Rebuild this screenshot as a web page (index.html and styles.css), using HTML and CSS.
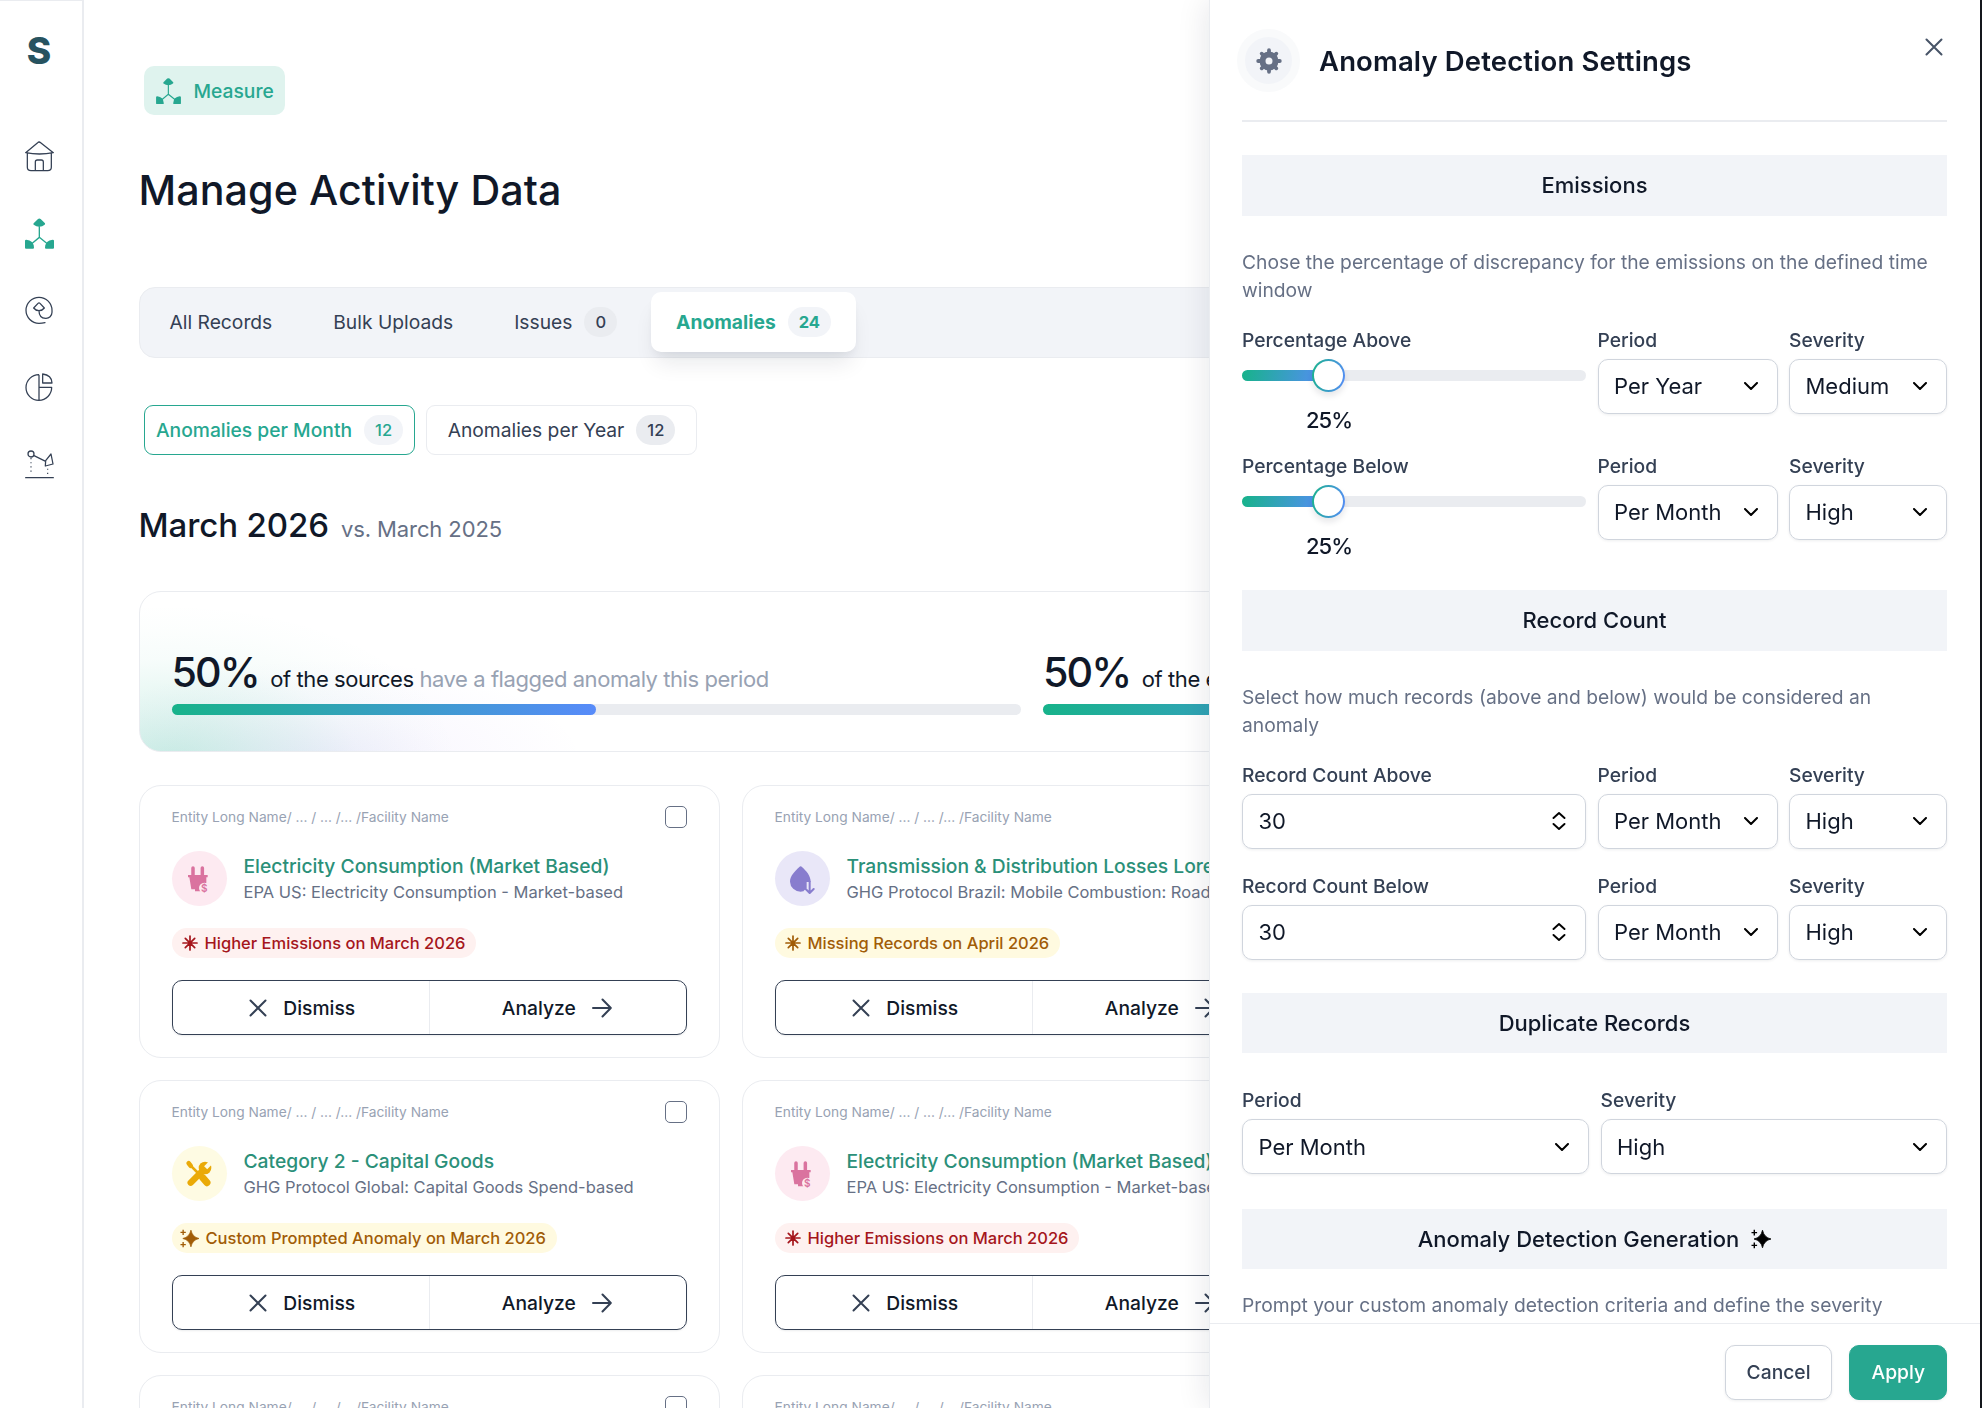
FILE: index.html
```html
<!DOCTYPE html>
<html lang="en">
<head>
  <meta charset="UTF-8" />
  <meta name="viewport" content="width=device-width, initial-scale=1.0"/>
  <title>Manage Activity Data</title>
  <link rel="stylesheet" href="styles.css">
</head>
<body>

  <!-- Icons -->
  <svg class="sprite">
    <symbol id="i-home" viewBox="0 0 87 91">
      <path d="M2 34 L38 4 Q42 0 47 4 L85 34 M2 34 Q43 42 85 34 M7 37 V78 Q7 88 18 88 H68 Q79 88 79 78 V37 M31 88 V62 Q31 56 37 56 H49 Q55 56 55 62 V88" fill="none" stroke="currentColor" stroke-width="3.8" stroke-linejoin="round" stroke-linecap="round"/>
    </symbol>
    <symbol id="i-measure" viewBox="0 0 87 91">
      <path d="M39 2 Q43 -1 47 2 L60 15 Q61 18 59 19 Q52 25 43 25 Q34 25 26 19 Q24 18 26 15 Z M0 67 Q0 64 4 64 Q26 66 27 88 Q27 91 24 91 H3 Q0 91 0 88 Z M87 67 Q87 64 83 64 Q61 66 60 88 Q60 91 63 91 H84 Q87 91 87 88 Z" fill="currentColor"/>
      <path d="M43 24 V57 L20 76 M43 57 L67 76" fill="none" stroke="currentColor" stroke-width="4"/>
    </symbol>
    <symbol id="i-target" viewBox="0 0 87 87">
      <path d="M60 80 Q51 82 42 82 A39 39 0 1 1 81 43 V49 A18 18 0 0 1 62 67 Q42 66 42 44 M39 22 Q42 19 45 22 L58 36 Q52 44 42 44 Q32 44 26 36 Z" fill="none" stroke="currentColor" stroke-width="3.8" stroke-linejoin="round" stroke-linecap="round"/>
    </symbol>
    <symbol id="i-pie" viewBox="0 0 87 87">
      <path d="M42 5 A38.5 38.5 0 1 0 80 43 H43 M42 5 V82 M53 5 V30 H81 Q80 6 53 3 Z" fill="none" stroke="currentColor" stroke-width="3.8" stroke-linejoin="round"/>
    </symbol>
    <symbol id="i-arm" viewBox="0 0 87 87">
      <path d="M27 17 L62 34 M62 32 L78 12 L84 42 L61 48 Z M2 83 H85" fill="none" stroke="currentColor" stroke-width="3.8" stroke-linejoin="round" stroke-linecap="round"/>
      <circle cx="18" cy="12" r="9" fill="none" stroke="currentColor" stroke-width="3.8"/>
      <path d="M18 24 V74 M68 56 V74" stroke="currentColor" stroke-width="3.5" stroke-dasharray="3.5 9"/>
    </symbol>
    <symbol id="i-plug" viewBox="0 0 90 90">
      <path d="M27 12 V32 M55 12 V32" stroke="#da739f" stroke-width="10.5" stroke-linecap="round"/>
      <path d="M12 33 H71 V40 H67 V56 L50 82 H33 V76 H22 L16 40 H12 Z" fill="#da739f"/>
      <circle cx="61" cy="72" r="16" fill="#fdeaf1"/>
      <text x="61" y="83" font-size="30" font-weight="600" text-anchor="middle" fill="#da739f">$</text>
    </symbol>
    <symbol id="i-drop" viewBox="0 0 90 90">
      <path d="M37 9 Q41 5 45 9 C58 21 71 35 71 53 A31 31 0 0 1 41 83 A32 31 0 0 1 9 53 C9 36 24 21 37 9 Z" fill="#887dce"/>
      <path d="M68 54 V84 M56 75 L68 87 L80 75" fill="none" stroke="#e9e7f8" stroke-width="18" stroke-linejoin="round"/>
      <path d="M68 53 V85 M56 75 L68 87 L80 75" fill="none" stroke="#887dce" stroke-width="6" stroke-linecap="round" stroke-linejoin="round"/>
    </symbol>
    <symbol id="i-tools" viewBox="0 0 90 90">
      <g fill="none" stroke="#eaaa08" stroke-linecap="round">
        <path d="M20 20 L48 48" stroke-width="8"/>
        <path d="M14 13 L20 20" stroke-width="14"/>
        <path d="M56 56 L69 71" stroke-width="21"/>
        <path d="M20 71 L58 33" stroke-width="19"/>
      </g>
      <circle cx="63" cy="27" r="19" fill="#eaaa08"/>
      <path d="M65 26 L82 9" stroke="#fefbe3" stroke-width="13"/>
    </symbol>
    <symbol id="i-star" viewBox="0 0 16 16">
      <path d="M8 1 V15 M1 8 H15 M3.3 3.3 L12.7 12.7 M12.7 3.3 L3.3 12.7" stroke="currentColor" stroke-width="1.7" stroke-linecap="round"/>
    </symbol>
    <symbol id="i-sparkle" viewBox="0 0 20 20">
      <path d="M11.5 1.2 Q13 8.5 20 10 Q13 11.5 11.5 18.8 Q10 11.5 3 10 Q10 8.5 11.5 1.2 Z" fill="currentColor" stroke="currentColor" stroke-width=".8" stroke-linejoin="round"/>
      <path d="M3.3 .8 V6.4 M.5 3.6 H6.1 M3.3 13.6 V19.2 M.5 16.4 H6.1" stroke="currentColor" stroke-width="1.4"/>
    </symbol>
    <symbol id="i-x" viewBox="0 0 18 18">
      <path d="M1.5 1.5 L16.5 16.5 M16.5 1.5 L1.5 16.5" stroke="currentColor" stroke-width="2" stroke-linecap="round"/>
    </symbol>
    <symbol id="i-arrow" viewBox="0 0 20 20">
      <path d="M1 10 H18.5 M10.5 1.5 L18.8 10 L10.5 18.5" fill="none" stroke="currentColor" stroke-width="2" stroke-linecap="round" stroke-linejoin="round"/>
    </symbol>
    <symbol id="i-down" viewBox="0 0 14 8">
      <path d="M1 1 L7 7 L13 1" fill="none" stroke="currentColor" stroke-width="2" stroke-linecap="round" stroke-linejoin="round"/>
    </symbol>
    <symbol id="i-updown" viewBox="0 0 14 18">
      <path d="M1.5 6 L7 1 L12.5 6 M1.5 12 L7 17 L12.5 12" fill="none" stroke="currentColor" stroke-width="1.9" stroke-linecap="round" stroke-linejoin="round"/>
    </symbol>
    <symbol id="i-gear" viewBox="0 0 26 26">
      <circle cx="13" cy="13" r="6.5" fill="none" stroke="currentColor" stroke-width="6"/>
      <path d="M13 2.2 V5 M13 21 V23.8 M2.2 13 H5 M21 13 H23.8 M5.7 5.7 L7 7 M19 19 L20.3 20.3 M20.3 5.7 L19 7 M7 19 L5.7 20.3" stroke="currentColor" stroke-width="3.8" stroke-linecap="round"/>
    </symbol>
  </svg>

  <nav class="sidebar">
    <div class="logo">S</div>
    <a><svg><use href="#i-home"/></svg></a>
    <a class="active"><svg><use href="#i-measure"/></svg></a>
    <a><svg><use href="#i-target"/></svg></a>
    <a><svg><use href="#i-pie"/></svg></a>
    <a><svg><use href="#i-arm"/></svg></a>
  </nav>

  <main>
    <div class="module"><svg><use href="#i-measure"/></svg>Measure</div>
    <h1>Manage Activity Data</h1>

    <div class="tabs">
      <div class="tab">All Records</div>
      <div class="tab">Bulk Uploads</div>
      <div class="tab">Issues <span class="count">0</span></div>
      <div class="tab active">Anomalies <span class="count">24</span></div>
    </div>

    <div class="pills">
      <div class="pill active">Anomalies per Month <span class="count">12</span></div>
      <div class="pill">Anomalies per Year <span class="count">12</span></div>
    </div>

    <div class="month">
      <h2>March 2026</h2>
      <span>vs. March 2025</span>
    </div>

    <section class="summary">
      <div class="stat">
        <p><b>50%</b> of the sources <em>have a flagged anomaly this period</em></p>
        <div class="bar"><div class="bar-fill"></div></div>
      </div>
      <div class="stat">
        <p><b>50%</b> of the emissions</p>
        <div class="bar"><div class="bar-fill"></div></div>
      </div>
    </section>

    <section class="cards" id="cards"></section>
  </main>

  <aside class="drawer">
    <header>
      <div class="gear"><svg><use href="#i-gear"/></svg></div>
      <h3>Anomaly Detection Settings</h3>
      <svg class="close"><use href="#i-x"/></svg>
    </header>

    <div class="drawer-body">
      <h4>Emissions</h4>
      <p>Chose the percentage of discrepancy for the emissions on the defined time window</p>
      <div class="row slider-row">
        <div class="field">
          <label>Percentage Above</label>
          <div class="slider"><div class="thumb"></div></div>
          <div class="slider-value">25%</div>
        </div>
        <div class="field"><label>Period</label><div class="select">Per Year<svg><use href="#i-down"/></svg></div></div>
        <div class="field"><label>Severity</label><div class="select">Medium<svg><use href="#i-down"/></svg></div></div>
      </div>
      <div class="row slider-row">
        <div class="field">
          <label>Percentage Below</label>
          <div class="slider"><div class="thumb"></div></div>
          <div class="slider-value">25%</div>
        </div>
        <div class="field"><label>Period</label><div class="select">Per Month<svg><use href="#i-down"/></svg></div></div>
        <div class="field"><label>Severity</label><div class="select">High<svg><use href="#i-down"/></svg></div></div>
      </div>

      <h4>Record Count</h4>
      <p>Select how much records (above and below) would be considered an anomaly</p>
      <div class="row">
        <div class="field"><label>Record Count Above</label><div class="select">30<svg class="stepper"><use href="#i-updown"/></svg></div></div>
        <div class="field"><label>Period</label><div class="select">Per Month<svg><use href="#i-down"/></svg></div></div>
        <div class="field"><label>Severity</label><div class="select">High<svg><use href="#i-down"/></svg></div></div>
      </div>
      <div class="row">
        <div class="field"><label>Record Count Below</label><div class="select">30<svg class="stepper"><use href="#i-updown"/></svg></div></div>
        <div class="field"><label>Period</label><div class="select">Per Month<svg><use href="#i-down"/></svg></div></div>
        <div class="field"><label>Severity</label><div class="select">High<svg><use href="#i-down"/></svg></div></div>
      </div>

      <h4>Duplicate Records</h4>
      <div class="row halves">
        <div class="field"><label>Period</label><div class="select">Per Month<svg><use href="#i-down"/></svg></div></div>
        <div class="field"><label>Severity</label><div class="select">High<svg><use href="#i-down"/></svg></div></div>
      </div>

      <h4>Anomaly Detection Generation <svg><use href="#i-sparkle"/></svg></h4>
      <p class="prompt">Prompt your custom anomaly detection criteria and define the severity</p>
    </div>

    <footer>
      <button>Cancel</button>
      <button class="primary">Apply</button>
    </footer>
  </aside>

  <script>
    const electricity = {
      icon: 'plug',
      title: 'Electricity Consumption (Market Based)',
      source: 'EPA US: Electricity Consumption - Market-based',
      tone: 'red', tagIcon: 'star', tag: 'Higher Emissions on March 2026'
    };
    const capital = {
      icon: 'tools',
      title: 'Category 2 - Capital Goods',
      source: 'GHG Protocol Global: Capital Goods Spend-based',
      tone: 'amber', tagIcon: 'sparkle', tag: 'Custom Prompted Anomaly on March 2026'
    };
    const losses = {
      icon: 'drop',
      title: 'Transmission & Distribution Losses Lorem',
      source: 'GHG Protocol Brazil: Mobile Combustion: Road',
      tone: 'amber', tagIcon: 'star', tag: 'Missing Records on April 2026'
    };

    // the grid fills column by column
    const anomalies = [electricity, capital, electricity, losses, electricity, capital];

    document.getElementById('cards').innerHTML = anomalies.map(a => `
      <article class="card">
        <div class="card-top">Entity Long Name/ ... / ... /... /Facility Name<span class="check"></span></div>
        <div class="card-main">
          <div class="avatar ${a.icon}"><svg><use href="#i-${a.icon}"/></svg></div>
          <div class="card-text">
            <div class="card-title">${a.title.replace('&', '&amp;')}</div>
            <div class="card-source">${a.source}</div>
          </div>
        </div>
        <div class="tag ${a.tone}"><svg class="${a.tagIcon}"><use href="#i-${a.tagIcon}"/></svg>${a.tag}</div>
        <div class="actions">
          <div class="dismiss"><svg class="x"><use href="#i-x"/></svg>Dismiss</div>
          <div class="analyze">Analyze<svg class="arrow"><use href="#i-arrow"/></svg></div>
        </div>
      </article>`).join('');
  </script>
</body>
</html>
```
FILE: styles.css
```css
:root {
  --primary: #27a790;
  --ink: #101828;
  --ink-2: #344054;
  --muted: #667085;
  --faint: #98a2b3;
  --line: #eaecf0;
  --fill: #f2f4f8;
  --gradient: linear-gradient(100deg, #17b38a, #588bfa);
}

* {
  box-sizing: border-box;
  margin: 0;
  padding: 0;
}

body {
  display: flex;
  width: 1982px;
  height: 1408px;
  overflow: hidden;
  background: #fff;
  color: var(--ink);
  font-family: Inter, "Liberation Sans", sans-serif;
  font-size: 19.25px;
}

svg {
  display: block;
  flex-shrink: 0;
}

.sprite {
  position: absolute;
  width: 0;
  height: 0;
}

/* Sidebar */
.sidebar {
  display: flex;
  flex-direction: column;
  align-items: center;
  width: 84px;
  flex-shrink: 0;
  padding: 27px 4px 0 0;
  border-top: 1px solid var(--line);
  border-right: 2px solid var(--line);
  color: var(--ink-2);
}

.logo {
  height: 89.5px;
  font-size: 37px;
  line-height: 46px;
  font-weight: 800;
  color: #275360;
}

.sidebar a {
  display: flex;
  align-items: center;
  height: 77px;
}

.sidebar svg {
  width: 29px;
  height: 31px;
}

.sidebar .active {
  color: var(--primary);
}

/* Main */
main {
  flex: 1;
  min-width: 0;
  height: 1408px;
  overflow: hidden;
  padding: 66px 56.5px 0 54.5px;
}

.module {
  display: flex;
  align-items: center;
  gap: 13px;
  width: 141px;
  height: 49px;
  margin-left: 5px;
  padding-left: 12px;
  border-radius: 10px;
  background: #dff3ee;
  color: var(--primary);
  font-weight: 500;
}

.module svg {
  width: 25px;
  height: 26px;
}

h1 {
  margin-top: 49px;
  font-size: 41.25px;
  line-height: 52px;
  font-weight: 500;
  letter-spacing: .06px;
}

.tabs {
  display: flex;
  align-items: center;
  height: 71.5px;
  margin-top: 70.5px;
  padding-left: 5px;
  border: 1px solid var(--line);
  border-radius: 16px;
  background: var(--fill);
  color: var(--ink-2);
}

.tab {
  display: flex;
  align-items: center;
  gap: 12px;
  height: 60px;
  margin-right: 11px;
  padding: 0 25px;
}

.tab.active {
  margin-left: -2px;
  border-radius: 10px;
  background: #fff;
  color: var(--primary);
  font-weight: 700;
  box-shadow: 0 16px 22px -5px rgba(16, 24, 40, .09), 0 5px 8px -3px rgba(16, 24, 40, .06);
}

.count {
  height: 30px;
  padding: 0 11px;
  border-radius: 15px;
  background: var(--line);
  font-size: 16.5px;
  line-height: 30px;
  font-weight: 500;
}

.active .count {
  background: var(--fill);
}

.tab.active .count {
  font-weight: 700;
}

.pills {
  display: flex;
  gap: 11px;
  margin: 47px 0 0 5.5px;
}

.pill {
  display: flex;
  align-items: center;
  justify-content: center;
  gap: 12px;
  width: 271px;
  height: 50px;
  border: 1px solid var(--line);
  border-radius: 9px;
  color: var(--ink-2);
}

.pill.active {
  border: 1.5px solid var(--primary);
  color: var(--primary);
  font-weight: 500;
}

.month {
  display: flex;
  align-items: baseline;
  gap: 12px;
  height: 40px;
  margin-top: 49.5px;
  line-height: 40px;
  font-size: 22px;
  letter-spacing: -.1px;
  color: var(--muted);
}

h2 {
  font-size: 33px;
  font-weight: 500;
  color: var(--ink);
}

.summary {
  display: flex;
  gap: 22px;
  height: 161px;
  margin-top: 46.5px;
  padding: 54.5px 32px 0;
  border: 1px solid var(--line);
  border-radius: 22px;
  background:
    radial-gradient(290px 160px at 30px 108%, rgba(23, 179, 138, .24), rgba(23, 179, 138, .12) 35%, rgba(23, 179, 138, .035) 65%, rgba(23, 179, 138, .01) 85%, rgba(23, 179, 138, 0)),
    radial-gradient(260px 105px at 185px 108%, rgba(140, 100, 240, .11), rgba(140, 100, 240, .04) 50%, rgba(140, 100, 240, 0)),
    #fff;
}

.stat {
  flex: 1;
}

.stat p {
  height: 50px;
  line-height: 50px;
  font-size: 22px;
  letter-spacing: -.44px;
  white-space: nowrap;
}

.stat b {
  margin-right: 6px;
  font-size: 41.25px;
  font-weight: 500;
  letter-spacing: -2px;
}

.stat em {
  font-style: normal;
  color: var(--faint);
}

.bar {
  height: 11px;
  margin-top: 7px;
  border-radius: 6px;
  background: var(--line);
}

.bar-fill {
  width: 50%;
  height: 100%;
  border-radius: 6px;
  background: var(--gradient);
}

/* Anomaly cards */
.cards {
  display: grid;
  grid-template-columns: repeat(3, 1fr);
  grid-template-rows: repeat(3, 273px);
  grid-auto-flow: column;
  gap: 22px;
  margin-top: 33px;
}

.card {
  padding: 20px 32px 0;
  border: 1px solid var(--line);
  border-radius: 22px;
  background: #fff;
}

.card-top {
  display: flex;
  align-items: center;
  justify-content: space-between;
  height: 22px;
  font-size: 13.75px;
  color: var(--faint);
}

.check {
  width: 22px;
  height: 22px;
  border: 1.5px solid var(--muted);
  border-radius: 5px;
}

.card-main {
  display: flex;
  align-items: center;
  gap: 17px;
  margin-top: 23px;
  white-space: nowrap;
}

.avatar {
  display: flex;
  align-items: center;
  justify-content: center;
  width: 55px;
  height: 55px;
  border-radius: 50%;
}

.avatar svg {
  width: 30px;
  height: 30px;
}

.plug { background: #fdeaf1; }
.drop { background: #e9e7f8; }
.tools { background: #fefbe3; }

.card-text {
  margin-top: -2px;
}

.card-title {
  line-height: 28px;
  font-weight: 500;
  color: #2b9079;
}

.card-source {
  font-size: 16.5px;
  line-height: 24px;
  color: var(--muted);
}

.tag {
  display: inline-flex;
  align-items: center;
  gap: 7px;
  height: 30px;
  margin-top: 22px;
  padding: 0 11px 0 10px;
  border-radius: 15px;
  font-size: 16.5px;
  font-weight: 500;
  vertical-align: top;
}

.tag svg {
  width: 16px;
  height: 16px;
}

.tag .sparkle {
  width: 19px;
  height: 19px;
  margin: 0 0 0 -2px;
}

.red {
  background: #fef1f0;
  color: #a5161c;
}

.amber {
  background: #fffae0;
  color: #a15c07;
}

.actions {
  display: flex;
  height: 55px;
  margin-top: 22px;
  border: 1.5px solid var(--ink-2);
  border-radius: 10px;
  font-weight: 500;
  box-shadow: 0 1px 2px rgba(16, 24, 40, .08);
}

.actions div {
  display: flex;
  flex: 1;
  align-items: center;
  justify-content: center;
  gap: 16px;
}

.actions .dismiss {
  padding-left: 3px;
}

.actions .analyze {
  padding-right: 2px;
  border-left: 1px solid var(--line);
}

.actions svg {
  color: var(--ink-2);
}

.x {
  width: 18px;
  height: 18px;
}

.arrow {
  width: 20px;
  height: 20px;
}

/* Settings drawer */
.drawer {
  position: fixed;
  top: 0;
  right: 0;
  display: flex;
  flex-direction: column;
  width: 773px;
  height: 1408px;
  border-left: 1px solid var(--line);
  border-right: 2px solid #14171c;
  background: #fff;
  box-shadow: -4px 0 28px rgba(16, 24, 40, .09);
}

.drawer header {
  display: flex;
  align-items: center;
  height: 122px;
  margin: 0 33px 0 32px;
  padding-top: 1px;
  border-bottom: 2px solid var(--line);
}

.gear {
  display: flex;
  align-items: center;
  justify-content: center;
  width: 63px;
  height: 63px;
  margin-left: -5px;
  border: 8px solid #f9fafb;
  border-radius: 50%;
  background: var(--fill);
  color: var(--muted);
}

.gear svg {
  width: 26px;
  height: 26px;
}

h3 {
  margin-left: 19px;
  font-size: 27.5px;
  font-weight: 600;
  letter-spacing: .14px;
}

.close {
  width: 18px;
  height: 18px;
  margin: -28px 4px 0 auto;
  color: #475467;
}

.drawer-body {
  flex: 1;
  min-height: 0;
  overflow: hidden;
  padding: 33px 33px 0 32px;
}

h4 {
  display: flex;
  align-items: center;
  justify-content: center;
  gap: 12px;
  height: 60.5px;
  background: var(--fill);
  font-size: 22px;
  font-weight: 500;
}

h4 svg {
  width: 20px;
  height: 20px;
  color: #000;
}

.drawer p {
  margin: 33.5px 0 22.5px;
  line-height: 27.5px;
  color: var(--muted);
}

.drawer .prompt {
  margin: 22.5px 0 0;
}

.row {
  display: grid;
  grid-template-columns: 344px 180px 158px;
  gap: 11.5px;
  height: 88.5px;
  margin-bottom: 22.5px;
}

.row + h4 {
  margin-top: 31.5px;
}

.slider-row {
  height: 110px;
  margin-bottom: 16px;
}

.slider-row + h4 {
  margin-top: 27.5px;
}

.halves {
  grid-template-columns: 1fr 1fr;
  gap: 12px;
  margin-top: 34px;
}

.halves + h4 {
  margin-top: 33px;
}

label {
  display: block;
  height: 27.5px;
  margin-bottom: 4.5px;
  line-height: 27.5px;
  font-weight: 500;
  color: var(--ink-2);
}

.select {
  display: flex;
  align-items: center;
  justify-content: space-between;
  height: 55px;
  padding: 0 19px 0 15.5px;
  border: 1px solid #d0d5dd;
  border-radius: 10px;
  font-size: 22px;
  box-shadow: 0 1px 3px rgba(16, 24, 40, .07);
}

.select svg {
  width: 14px;
  height: 8px;
  color: #000;
}

.select .stepper {
  height: 18px;
}

.slider {
  display: flex;
  align-items: center;
  height: 11px;
  margin-top: 15.5px;
  padding-left: 70px;
  border-radius: 6px;
  background: var(--gradient) 0 0 / 86px 100% no-repeat, var(--line);
}

.thumb {
  width: 33px;
  height: 33px;
  border: 2px solid transparent;
  border-radius: 50%;
  background: linear-gradient(#fff, #fff) padding-box, var(--gradient) border-box;
  box-shadow: 0 4px 6px rgba(16, 24, 40, .1);
}

.slider-value {
  width: 174px;
  margin-top: 23px;
  line-height: 33px;
  font-size: 22px;
  font-weight: 500;
  letter-spacing: -1px;
  text-align: center;
}

.drawer footer {
  display: flex;
  justify-content: flex-end;
  gap: 17px;
  height: 85.5px;
  padding: 21px 33px 0;
  border-top: 1px solid var(--line);
}

button {
  height: 55px;
  padding: 0 21px;
  border: 1px solid #d0d5dd;
  border-radius: 10px;
  background: #fff;
  color: var(--ink-2);
  font: inherit;
  font-weight: 500;
  box-shadow: 0 1px 3px rgba(16, 24, 40, .07);
}

.primary {
  border-color: var(--primary);
  background: var(--primary);
  color: #fff;
}
```
